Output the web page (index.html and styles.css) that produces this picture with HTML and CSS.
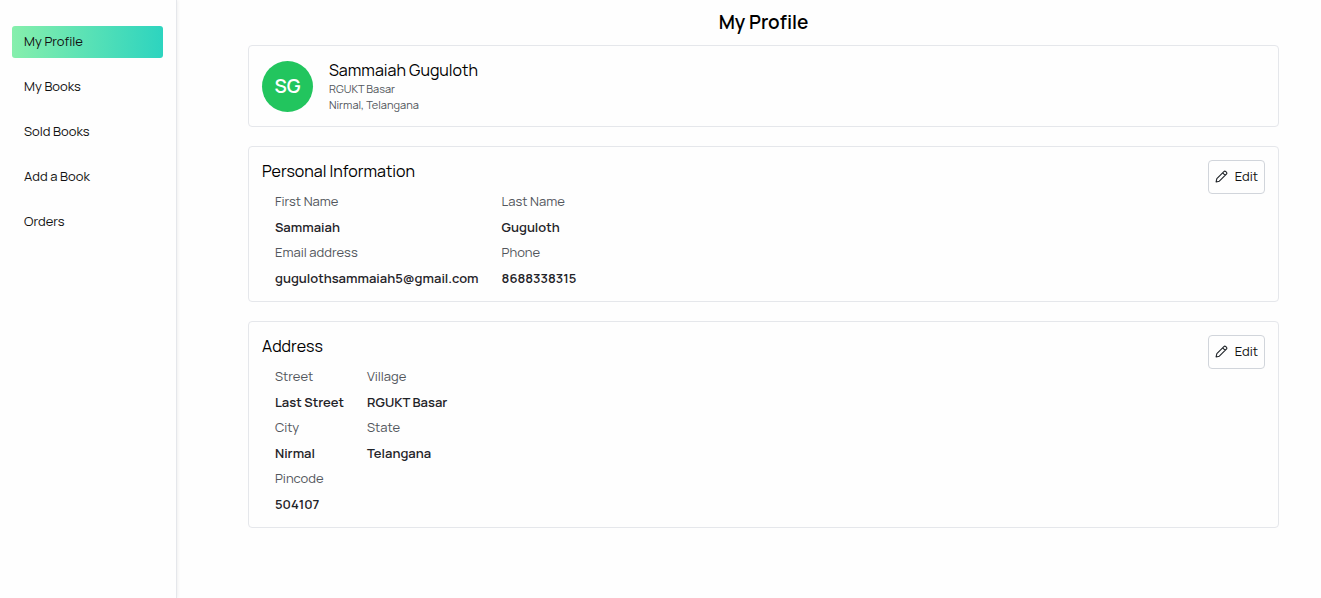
FILE: index.html
```html
<!DOCTYPE html>
<html lang="en">
<head>
<meta charset="utf-8">
<meta name="viewport" content="width=device-width, initial-scale=1">
<title>My Profile</title>
<link rel="stylesheet" href="styles.css">
</head>
<body>
<div class="layout">
  <nav class="sidebar" aria-label="Account">
    <a class="nav-link active" href="#profile" aria-current="page">My Profile</a>
    <a class="nav-link" href="#books">My Books</a>
    <a class="nav-link" href="#sold">Sold Books</a>
    <a class="nav-link" href="#add">Add a Book</a>
    <a class="nav-link" href="#orders">Orders</a>
  </nav>
  <main class="content">
    <h1 class="title">My Profile</h1>
    <section class="card summary">
      <div class="avatar">SG</div>
      <div>
        <h2 class="name">Sammaiah Guguloth</h2>
        <p class="meta">RGUKT Basar</p>
        <p class="meta">Nirmal, Telangana</p>
      </div>
    </section>
    <section class="card details">
      <div>
        <h2 class="heading">Personal Information</h2>
        <dl class="fields">
          <div><dt>First Name</dt><dd>Sammaiah</dd></div>
          <div><dt>Last Name</dt><dd>Guguloth</dd></div>
          <div><dt>Email address</dt><dd>gugulothsammaiah5@gmail.com</dd></div>
          <div><dt>Phone</dt><dd>8688338315</dd></div>
        </dl>
      </div>
      <button class="edit" type="button" aria-label="Edit personal information">
        <svg class="pencil" viewBox="0 0 24 24" aria-hidden="true"><path d="M2 22l1.4-6L16.4 3a2.5 2.5 0 0 1 3.5 0l1.1 1.1a2.5 2.5 0 0 1 0 3.5L8 20.6 2 22zM14.2 5.2l4.6 4.6"/></svg>
        Edit
      </button>
    </section>
    <section class="card details">
      <div>
        <h2 class="heading">Address</h2>
        <dl class="fields">
          <div><dt>Street</dt><dd>Last Street</dd></div>
          <div><dt>Village</dt><dd>RGUKT Basar</dd></div>
          <div><dt>City</dt><dd>Nirmal</dd></div>
          <div><dt>State</dt><dd>Telangana</dd></div>
          <div><dt>Pincode</dt><dd>504107</dd></div>
        </dl>
      </div>
      <button class="edit" type="button" aria-label="Edit address">
        <svg class="pencil" viewBox="0 0 24 24" aria-hidden="true"><path d="M2 22l1.4-6L16.4 3a2.5 2.5 0 0 1 3.5 0l1.1 1.1a2.5 2.5 0 0 1 0 3.5L8 20.6 2 22zM14.2 5.2l4.6 4.6"/></svg>
        Edit
      </button>
    </section>
  </main>
</div>
</body>
</html>
```

FILE: styles.css
```css
* { box-sizing: border-box; }
body, h1, h2, p, dl, dd { margin: 0; }
body {
  background: #fefefe;
  color: #000;
  font: 400 13px/19px Manrope, Inter, sans-serif;
}
.layout { display: flex; min-height: 100vh; }
.sidebar {
  display: flex;
  flex-direction: column;
  flex: none;
  gap: 13px;
  width: 177px;
  padding: 26px 13px 26px 12px;
  border-right: 1px solid #e5e7eb;
  box-shadow: 1px 0 3px rgba(0, 0, 0, 0.06);
}
.nav-link {
  padding: 5px 12px 7px;
  border-radius: 3px;
  line-height: 20px;
  color: #111;
  text-decoration: none;
}
.active { background: linear-gradient(to right, #86efac, #2dd4bf); }
.content { flex: 1; padding: 9px 42px 26px 71px; }
.title {
  margin-bottom: 10px;
  font-size: 19px;
  font-weight: 600;
  line-height: 26px;
  text-align: center;
}
.card {
  display: flex;
  margin-bottom: 19px;
  padding: 13px 13px 10px;
  border: 1px solid #e5e7eb;
  border-radius: 4px;
}
.summary { align-items: center; gap: 16px; padding: 13px; }
.avatar {
  display: grid;
  place-items: center;
  width: 51px;
  height: 51px;
  border-radius: 50%;
  background: #22c55e;
  color: #fff;
  font-size: 19px;
  font-weight: 600;
}
.name, .heading { font-size: 16px; font-weight: 400; line-height: 22px; }
.meta { font-size: 11px; line-height: 16px; color: #52565c; }
.details { align-items: flex-start; justify-content: space-between; }
.fields {
  display: grid;
  grid-template-columns: auto auto;
  justify-content: start;
  column-gap: 23px;
  padding: 7px 13px 0;
}
.fields dt { line-height: 25px; color: #52565c; }
.fields dd { line-height: 26px; font-weight: 600; color: #1f2328; }
.edit {
  display: flex;
  align-items: center;
  gap: 7px;
  padding: 5px 6px 7px;
  border: 1px solid #d1d5db;
  border-radius: 4px;
  background: #fefefe;
  color: #111;
  font: inherit;
  line-height: 20px;
}
.pencil {
  width: 13px;
  height: 13px;
  fill: none;
  stroke: #1f2328;
  stroke-width: 2;
  stroke-linejoin: round;
}
```
